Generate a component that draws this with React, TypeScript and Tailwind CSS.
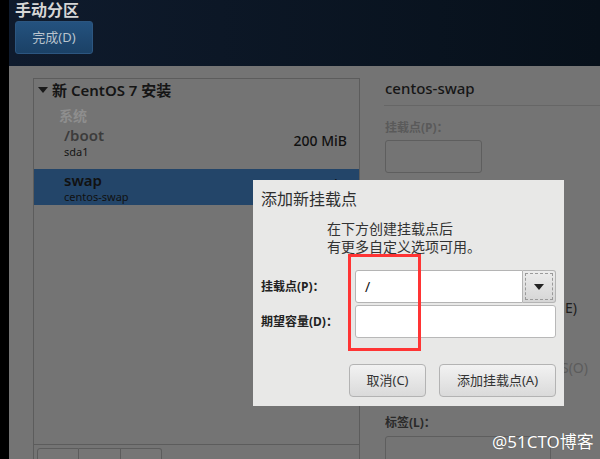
import React from 'react';

const cjk = { fontFamily: '"Noto Sans", "Noto Sans CJK SC", sans-serif' };

const Triangle: React.FC = () => (
  <svg width="10" height="6" viewBox="0 0 10 6" className="shrink-0">
    <path d="M0 0 L10 0 L5 6 Z" fill="#1a1a1a" />
  </svg>
);

const App: React.FC = () => {
  return (
    <div className="relative w-[600px] h-[459px] overflow-hidden flex bg-black" style={cjk}>
      <div className="w-[9px] shrink-0 bg-black" />
      <div className="flex-1 flex flex-col">
        {/* header */}
        <div className="h-[66px] shrink-0 bg-gradient-to-r from-[#0f1b2d] to-[#07101a] pl-[6px] pt-[1px]">
          <div className="text-[16px] leading-[18px] font-bold text-[#d6d6d6]">手动分区</div>
          <button className="mt-[2px] w-[78px] h-[33px] rounded-[3px] border border-[#2c5680] bg-gradient-to-b from-[#24527f] to-[#1b4166] text-[13px] text-[#b9c3cd]">
            完成(D)
          </button>
        </div>

        {/* body */}
        <div className="flex-1 bg-[#747474] flex gap-[24px] pl-[24px] pt-[12px]">
          <div className="w-[327px] shrink-0 border border-[#5c5c5c] border-b-0 flex flex-col">
            <div className="h-[366px] border-b border-[#5c5c5c]">
              <div className="flex items-center gap-[4px] pl-[4px] pt-[2px] h-[20px]">
                <Triangle />
                <span className="text-[15px] font-semibold text-[#151515]">新 CentOS 7 安装</span>
              </div>
              <div className="pl-[25px] pt-[8px] text-[14px] font-bold leading-[18px] text-[#8e8e8e]">系统</div>
              <div className="pl-[30px] pr-[12px] pt-[1px] flex justify-between">
                <div>
                  <div className="text-[15px] font-semibold leading-[18px] text-[#3c3c3c]">/boot</div>
                  <div className="text-[11px] leading-[16px] text-[#151515]">sda1</div>
                </div>
                <div className="pt-[4px] text-[14px] font-medium text-[#111]">200 MiB</div>
              </div>
              <div className="mt-[9px] h-[36px] bg-[#234569] pl-[30px] pr-[12px] flex justify-between">
                <div className="pt-[2px]">
                  <div className="text-[15px] font-semibold leading-[19px] text-[#111]">swap</div>
                  <div className="text-[11px] leading-[14px] text-[#111]">centos-swap</div>
                </div>
                <div className="pt-[5px] text-[14px] font-medium text-[#111]">2000 MiB</div>
              </div>
            </div>
            <div className="flex pl-[3px] pt-[3px]">
              <div className="w-[42px] h-[12px] border border-[#5c5c5c] rounded-tl-[3px] bg-[#767676]" />
              <div className="w-[42px] h-[12px] border border-l-0 border-[#5c5c5c] bg-[#767676]" />
              <div className="w-[41px] h-[12px] border border-l-0 border-[#5c5c5c] rounded-tr-[3px] bg-[#767676]" />
            </div>
          </div>

          <div className="flex-1 flex flex-col">
            <div className="pl-[1px] text-[15px] font-medium leading-[20px] text-[#161616]">centos-swap</div>
            <div className="mt-[7px] h-px bg-[#666]" />
            <div className="mt-[13px] pl-[1px] text-[12px] font-bold text-[#5a5a5a]">挂载点(P)：</div>
            <div className="mt-[3px] ml-[1px] w-[97px] h-[33px] rounded-[3px] border border-[#5e5e5e]" />
            <div className="mt-[124px] self-end text-[14px] text-[#1e1e1e] pr-[23px]">E)</div>
            <div className="mt-[39px] self-end text-[14px] text-[#5c5c5c] pr-[12px]">S(O)</div>
            <div className="mt-[36px] pl-[1px] text-[12px] font-bold text-[#2a2a2a]">标签(L)：</div>
            <div className="mt-[4px] ml-[1px] w-[166px] h-[30px] rounded-[3px] border border-[#5e5e5e]" />
          </div>
        </div>
      </div>

      {/* dialog */}
      <div className="absolute left-[253px] top-[180px] w-[311px] h-[226px] bg-[#e8e8e7] flex flex-col pl-[8px] pr-[8px]">
        <div className="pt-[9px] text-[16px] leading-[20px] text-[#2f2f2f]">添加新挂载点</div>
        <div className="mt-[11px] pl-[66px] text-[14px] leading-[18px] text-[#333]">
          <div>在下方创建挂载点后</div>
          <div>有更多自定义选项可用。</div>
        </div>
        <div className="mt-[14px] flex items-center">
          <div className="w-[94px] text-[12px] font-bold text-[#222]">挂载点(P)：</div>
          <div className="flex h-[33px]">
            <div className="w-[168px] bg-white border border-[#b4b4b4] rounded-l-[3px] pl-[9px] text-[14px] leading-[31px] text-[#111]">/</div>
            <div className="w-[33px] border border-l-0 border-[#b4b4b4] rounded-r-[3px] bg-gradient-to-b from-[#ececec] to-[#d6d6d6] p-[2px]">
              <div className="w-full h-full border border-dashed border-[#9a9a9a] flex items-center justify-center">
                <svg width="10" height="6" viewBox="0 0 10 6">
                  <path d="M0 0 L10 0 L5 6 Z" fill="#222" />
                </svg>
              </div>
            </div>
          </div>
        </div>
        <div className="mt-[2px] flex items-center">
          <div className="w-[94px] text-[12px] font-bold text-[#222]">期望容量(D)：</div>
          <div className="w-[201px] h-[33px] bg-white border border-[#b8b8b8] rounded-[3px]" />
        </div>
        <div className="mt-[26px] flex justify-end gap-[13px]">
          <button className="w-[77px] h-[33px] rounded-[4px] border border-[#b3b3b3] bg-gradient-to-b from-[#f2f2f2] to-[#dadada] text-[13px] text-[#333]">
            取消(C)
          </button>
          <button className="w-[117px] h-[33px] rounded-[4px] border border-[#b3b3b3] bg-gradient-to-b from-[#f2f2f2] to-[#dadada] text-[13px] text-[#333]">
            添加挂载点(A)
          </button>
        </div>
      </div>

      {/* annotation */}
      <div className="absolute left-[348px] top-[254px] w-[73px] h-[97px] border-[3px] border-[#ff3434]" />

      {/* watermark */}
      <div className="absolute left-[492px] top-[429px] text-[17px] text-white" style={{ textShadow: '0 0 1px rgba(0,0,0,0.4)' }}>
        @51CTO博客
      </div>
    </div>
  );
};

export default App;
